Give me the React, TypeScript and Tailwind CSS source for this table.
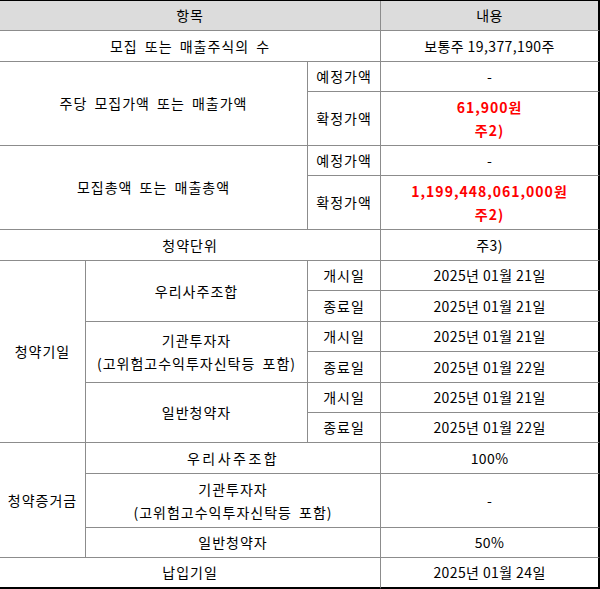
import type { ReactNode } from 'react';

const line = 'border-r border-b border-[#8c8c8c] tracking-[1px] [word-spacing:3px]';
const last = 'border-r-2 border-r-black border-b border-b-[#8c8c8c] tracking-[0.4px]';

function Td({
  children,
  className = '',
  colSpan,
  rowSpan,
  end = false,
}: {
  children?: ReactNode;
  className?: string;
  colSpan?: number;
  rowSpan?: number;
  end?: boolean;
}) {
  return (
    <td
      colSpan={colSpan}
      rowSpan={rowSpan}
      className={`p-0 text-center align-middle ${end ? last : line} ${className}`}
    >
      {children}
    </td>
  );
}

function Red({ value }: { value: string }) {
  return (
    <div className="font-bold tracking-[1px] text-[#ff0000] leading-[23px]">
      <div>{value}</div>
      <div>주2)</div>
    </div>
  );
}

const periods = [
  { group: '우리사주조합', start: '2025년 01월 21일', end: '2025년 01월 21일' },
  {
    group: (
      <>
        기관투자자
        <br />
        (고위험고수익투자신탁등 포함)
      </>
    ),
    start: '2025년 01월 21일',
    end: '2025년 01월 22일',
  },
  { group: '일반청약자', start: '2025년 01월 21일', end: '2025년 01월 22일' },
];

export default function App() {
  return (
    <div className="w-[600px] bg-white text-[14px] text-black [font-family:'Noto_Sans_CJK_KR',sans-serif]">
      <table className="w-[600px] table-fixed border-separate border-spacing-0 border-t border-t-black">
        <colgroup>
          <col className="w-[86px]" />
          <col className="w-[222px]" />
          <col className="w-[73px]" />
          <col className="w-[219px]" />
        </colgroup>
        <tbody>
          <tr className="h-[30px] bg-[#dcdcdc]">
            <Td colSpan={3}>항목</Td>
            <Td end>내용</Td>
          </tr>
          <tr className="h-[31px]">
            <Td colSpan={3}>모집 또는 매출주식의 수</Td>
            <Td end>보통주 19,377,190주</Td>
          </tr>
          <tr className="h-[30px]">
            <Td colSpan={2} rowSpan={2}>
              주당 모집가액 또는 매출가액
            </Td>
            <Td>예정가액</Td>
            <Td end>-</Td>
          </tr>
          <tr className="h-[54px]">
            <Td>확정가액</Td>
            <Td end>
              <Red value="61,900원" />
            </Td>
          </tr>
          <tr className="h-[30px]">
            <Td colSpan={2} rowSpan={2}>
              모집총액 또는 매출총액
            </Td>
            <Td>예정가액</Td>
            <Td end>-</Td>
          </tr>
          <tr className="h-[54px]">
            <Td>확정가액</Td>
            <Td end>
              <Red value="1,199,448,061,000원" />
            </Td>
          </tr>
          <tr className="h-[31px]">
            <Td colSpan={3}>청약단위</Td>
            <Td end>주3)</Td>
          </tr>
          {periods.flatMap((p, i) => [
            <tr key={`s${i}`} className="h-[30px]">
              {i === 0 && <Td rowSpan={6}>청약기일</Td>}
              <Td rowSpan={2} className="leading-[23px]">
                {p.group}
              </Td>
              <Td>개시일</Td>
              <Td end>{p.start}</Td>
            </tr>,
            <tr key={`e${i}`} className={i === 2 ? 'h-[30px]' : 'h-[31px]'}>
              <Td>종료일</Td>
              <Td end>{p.end}</Td>
            </tr>,
          ])}
          <tr className="h-[31px]">
            <Td rowSpan={3}>청약증거금</Td>
            <Td colSpan={2} className="tracking-[2.5px]">
              우리사주조합
            </Td>
            <Td end>100%</Td>
          </tr>
          <tr className="h-[54px]">
            <Td colSpan={2} className="leading-[23px]">
              기관투자자
              <br />
              (고위험고수익투자신탁등 포함)
            </Td>
            <Td end>-</Td>
          </tr>
          <tr className="h-[30px]">
            <Td colSpan={2}>일반청약자</Td>
            <Td end>50%</Td>
          </tr>
          <tr className="h-[31px]">
            <Td colSpan={3} className="border-b-2 border-b-black">
              납입기일
            </Td>
            <td className="border-r-2 border-b-2 border-black p-0 text-center align-middle tracking-[0.4px]">
              2025년 01월 24일
            </td>
          </tr>
        </tbody>
      </table>
    </div>
  );
}
